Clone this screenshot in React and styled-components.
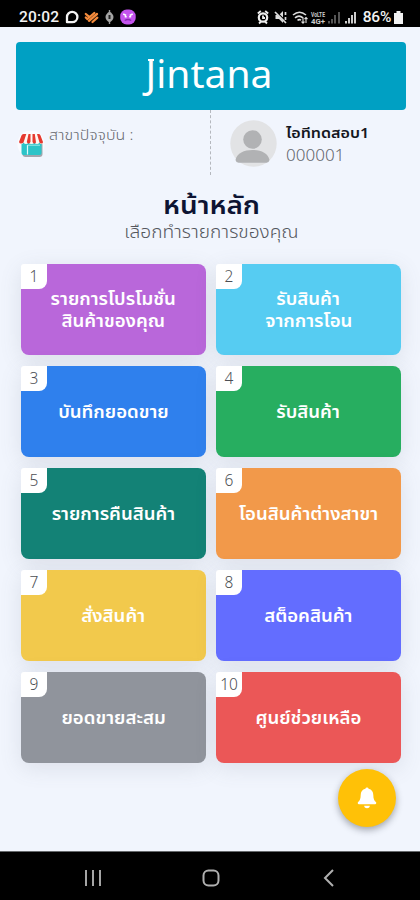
import styled, { createGlobalStyle } from "styled-components";

const GlobalStyle = createGlobalStyle`
  * {
    box-sizing: border-box;
  }

  body {
    margin: 0;
    background: #f1f5fd;
    font-family: "Noto Sans Thai", "Prompt", "Kanit", "Noto Sans", sans-serif;
  }
`;

const Phone = styled.div`
  position: relative;
  width: 420px;
  height: 900px;
  display: flex;
  flex-direction: column;
  overflow: hidden;
  background: #f1f5fd;
`;

const StatusBar = styled.div`
  height: 27px;
  flex: none;
  background: #000;
  color: #f2f2f2;
  display: flex;
  align-items: center;
  justify-content: space-between;
  padding: 6px 17px 0 19px;
  font-family: Roboto, sans-serif;
  font-size: 15.5px;
  font-weight: 500;
  line-height: 20px;
`;

const StatusGroup = styled.div`
  display: flex;
  align-items: center;
  gap: ${(p) => p.$gap}px;

  svg {
    display: block;
  }
`;

const Clock = styled.span`
  width: 42px;
  letter-spacing: 0.2px;
`;

const Battery = styled.span`
  letter-spacing: -0.3px;
`;

const Page = styled.main`
  flex: 1;
  padding: 15px 14px 0 16px;
`;

const Banner = styled.header`
  position: relative;
  height: 68px;
  border-radius: 4px;
  background: #00a0c3;
  color: #fff;
  display: flex;
  justify-content: center;
  padding-right: 4px;
  font-family: "Noto Sans", sans-serif;
  font-size: 39px;
  font-weight: 400;
  line-height: 62px;

  /* serif on the head of the J */
  &::before {
    content: "";
    position: absolute;
    left: 132px;
    top: 17px;
    width: 6px;
    height: 2px;
    background: #fff;
  }
`;

const InfoRow = styled.section`
  display: flex;
  height: 65px;
`;

const Branch = styled.div`
  width: 195px;
  border-right: 1px dashed #b5b8be;
  display: flex;
  align-items: flex-start;
  padding: 15px 0 0 1px;
  gap: 4px;
`;

const BranchIcon = styled.div`
  width: 28px;
  height: 40px;
  display: flex;
  align-items: center;
  justify-content: center;
`;

/* Wide lettering: the Thai face is stretched a little sideways */
const Wide = styled.span`
  display: block;
  transform: scaleX(${(p) => p.$x || 1.115});
  transform-origin: ${(p) => p.$origin || "center"};
  white-space: nowrap;
`;

const BranchLabel = styled(Wide)`
  color: #65686e;
  font-size: 14px;
  font-weight: 300;
  line-height: 21px;
`;

const User = styled.div`
  display: flex;
  padding: 10px 0 0 19px;
  gap: 9px;
`;

const UserText = styled.div`
  padding-top: 3px;
`;

const UserName = styled(Wide)`
  color: #16181f;
  font-size: 14px;
  font-weight: 600;
  line-height: 22px;
`;

const UserCode = styled(Wide)`
  color: #65686e;
  font-family: "Noto Sans", sans-serif;
  font-size: 15.5px;
  font-weight: 300;
  line-height: 21px;
`;

const Heading = styled.div`
  display: flex;
  flex-direction: column;
  align-items: center;
  padding-top: 15px;
  height: 89px;

  h1 {
    margin: 0 0 -1px;
    color: #0d1433;
    font-size: 25px;
    font-weight: 600;
    line-height: 32px;
  }

  p {
    margin: 0;
    color: #54575d;
    font-size: 17px;
    font-weight: 300;
    line-height: 24px;
  }
`;

const Menu = styled.nav`
  display: grid;
  grid-template-columns: 185px 185px;
  grid-auto-rows: 91px;
  gap: 11px 10px;
  padding-left: 5px;
`;

const Tile = styled.button`
  position: relative;
  border: none;
  border-radius: 8px;
  background: ${(p) => p.$color};
  box-shadow: 0 5px 22px rgba(90, 100, 110, 0.14);
  color: #fff;
  display: flex;
  flex-direction: column;
  align-items: center;
  justify-content: center;
  padding: 2px 0 0;
  font-family: inherit;
  font-size: 17px;
  font-weight: 600;
  line-height: 22px;
`;

const Num = styled.span`
  position: absolute;
  top: 0;
  left: 0;
  width: 26px;
  height: 25px;
  border-radius: 3px 0 8px 0;
  background: #fff;
  color: #4c4f54;
  font-family: "Noto Sans", sans-serif;
  font-size: 15.5px;
  font-weight: 300;
  line-height: 24px;
  text-align: center;
`;

const BellButton = styled.button`
  position: absolute;
  left: 338px;
  top: 769px;
  width: 58px;
  height: 58px;
  border: none;
  border-radius: 50%;
  background: #ffc107;
  box-shadow: 0 3px 7px rgba(40, 45, 55, 0.4);
  display: flex;
  align-items: center;
  justify-content: center;
  padding: 0;
`;

const NavBar = styled.footer`
  height: 49px;
  flex: none;
  border-top: 1px solid #66696c;
  background: #000;
  display: flex;
  align-items: center;
  justify-content: space-between;
  padding: 3px 81px 0 84px;
`;

const MENU = [
  { color: "#b967da", lines: ["รายการโปรโมชั่น", "สินค้าของคุณ"] },
  { color: "#56ccf2", lines: ["รับสินค้า", "จากการโอน"] },
  { color: "#2f80ed", lines: ["บันทึกยอดขาย"] },
  { color: "#27ae60", lines: ["รับสินค้า"] },
  { color: "#138276", lines: ["รายการคืนสินค้า"] },
  { color: "#f2994a", lines: ["โอนสินค้าต่างสาขา"] },
  { color: "#f2c94c", lines: ["สั่งสินค้า"] },
  { color: "#636dff", lines: ["สต็อคสินค้า"] },
  { color: "#90949c", lines: ["ยอดขายสะสม"] },
  { color: "#eb5757", lines: ["ศูนย์ช่วยเหลือ"] },
];

function NotificationIcons() {
  return (
    <svg width="72" height="16" viewBox="0 0 72 16" fill="none">
      <path d="M2 13.2V8a5.2 5.2 0 1 1 5.2 5.2Z" stroke="#f4f4f4" strokeWidth="2.3" strokeLinejoin="round" />
      <g stroke="#f58b3c" strokeWidth="2.3" strokeLinecap="round">
        <path d="M20.800 5l3.700 3.200M20.800 8.500l1.500 1.500 7-6M24 11.800L32 5M27.500 13l4.800-4.300" />
      </g>
      <path d="M44.500 1v14" stroke="#999" strokeWidth="1.400" />
      <path d="M44.500 2.500q4 2.500 4 5.500t-4 5.500q-4-2.500-4-5.500t4-5.500Z" fill="#a5a5a5" />
      <path d="M44.500 6v4" stroke="#222" strokeWidth="2" />
      <g transform="translate(4.200 0)">
        <rect x="51" y="0.500" width="15.500" height="15" rx="6.500" fill="#c453ee" />
        <path d="M54 5l3 1.500M63.500 5l-3 1.500" stroke="#fff" strokeWidth="1.500" />
        <path d="M55.500 7.800h2M60 7.800h2" stroke="#fff" strokeWidth="1.500" />
        <path d="M55.500 11.500q3.300-2 6.500 0" stroke="#8a2bb0" strokeWidth="1.300" />
      </g>
    </svg>
  );
}

function SystemIcons() {
  return (
    <svg width="103" height="16" viewBox="0 0 103 16" fill="none">
      <circle cx="6" cy="8.500" r="4.200" stroke="#eee" strokeWidth="2.200" />
      <path d="M.8 4.500l3-2.500M11.200 4.500l-3-2.500M2 14.500l2-2M10 14.500l-2-2M6 6.500v2.500h2" stroke="#eee" strokeWidth="1.800" />
      <path d="M18.500 6h3.500l4-4v12l-4-4h-3.500Z" fill="#ddd" />
      <path d="M18.500 2.500l11 11" stroke="#000" strokeWidth="2.200" />
      <path d="M18 3l11 11M28.500 3v3M28.500 8v3" stroke="#ddd" strokeWidth="1.700" />
      <g stroke="#ddd" strokeWidth="1.600">
        <path d="M36 6q6.500-5.500 13 0M38 8.800q4-3.500 8 0M40.500 11.300q2-1.500 3.500 0" />
        <path d="M46 8.500v6M44.500 12.700l1.500 1.500 1.500-1.500M49 14V8M47.500 10L49 8.500l1.500 1.500" strokeWidth="1.100" />
      </g>
      <g fill="#ccc" fontSize="7" fontWeight="700">
        <text x="54" y="7.500" textLength="14" lengthAdjust="spacingAndGlyphs">VoLTE</text>
        <text x="54" y="14.500" textLength="14" lengthAdjust="spacingAndGlyphs">4G+</text>
      </g>
      <g fill="#555">
        <rect x="71" y="12" width="2" height="2.500" />
        <rect x="74" y="10" width="2" height="4.500" />
        <rect x="77" y="6" width="2" height="8.500" />
        <rect x="81" y="3" width="2" height="11.500" />
      </g>
      <g fill="#ccc">
        <rect x="88" y="12" width="2" height="2.500" />
        <rect x="91" y="9" width="2" height="5.500" />
        <rect x="94" y="6" width="2" height="8.500" />
        <rect x="97" y="3" width="2" height="11.500" />
      </g>
    </svg>
  );
}

function StoreIcon() {
  return (
    <svg width="28" height="28" viewBox="0 0 28 28">
      <circle cx="14" cy="13" r="13.500" fill="#fafbff" />
      <rect x="5.500" y="11" width="20" height="15" rx="3" fill="#a2a6ad" />
      <rect x="4.500" y="10" width="20" height="14" rx="2" fill="#2cc4c8" />
      <path d="M10.500 14v9.500" stroke="#dffafa" strokeWidth="1.200" />
      <path d="M10.500 14.200h12.500" stroke="#9ee9ea" strokeWidth="1" />
      <path d="M6.500 3h15q1.500 0 2 1.500L26 11q0 2-1.500 2t-2-1.500q-1 1.500-2.500 1.500t-2.500-1.500q-1 1.500-3 1.500t-3-1.500Q10.500 13 9 13t-2.500-1.500Q6 13 4 13t-2-2l2.500-6.500Q5 3 6.500 3Z" fill="#fff7f2" />
      <path d="M6.500 3h2.800L6.500 11.500Q5.500 12.500 4 12.500T2 11l2.500-6.500Q5 3 6.500 3ZM11.500 3h2v8q-1 1.500-2 1.500T9.800 11ZM15.500 3h2.300l1.200 8.500q-1 1-1.800 1T15.500 11ZM20 3h2q1 0 1.500 1.500L26 11q0 1.500-1.500 1.500t-2-1Z" fill="#e5392f" />
    </svg>
  );
}

function Avatar() {
  return (
    <svg width="47" height="47" viewBox="0 0 47 47">
      <circle cx="23.500" cy="23.500" r="23.200" fill="#e2e3e5" />
      <circle cx="22.500" cy="19.500" r="9.300" fill="#b1b2b4" />
      <path d="M5.500 40C7 33 14 30 22.500 30S38 33 39.500 40q-.5 2.700-3 2.700h-28Q6 42.700 5.500 40Z" fill="#b1b2b4" />
    </svg>
  );
}

function BellIcon() {
  return (
    <svg width="20" height="22" viewBox="0 0 20 22" fill="#fff">
      <path d="M10 .5a1.600 1.600 0 0 1 1.600 1.200C14.700 2.400 16.300 4.800 16.300 8c0 4 1 5.800 2.600 7.100.8.800.4 2.100-.8 2.100H1.900c-1.200 0-1.600-1.300-.8-2.100C2.700 13.800 3.700 12 3.700 8c0-3.200 1.600-5.600 4.700-6.300A1.600 1.600 0 0 1 10 .5Z" />
      <path d="M7.200 18.800h5.600a2.800 2.400 0 0 1-5.600 0Z" />
    </svg>
  );
}

export default function App() {
  return (
    <Phone>
      <GlobalStyle />
      <StatusBar>
        <StatusGroup $gap={4}>
          <Clock>20:02</Clock>
          <NotificationIcons />
        </StatusGroup>
        <StatusGroup $gap={3}>
          <SystemIcons />
          <Battery>86%</Battery>
          <svg width="9" height="14" viewBox="0 0 9 14" fill="#f2f2f2">
            <path d="M2.500 1h4v2H9v11H0V3h2.500Z" />
          </svg>
        </StatusGroup>
      </StatusBar>

      <Page>
        <Banner>Jintana</Banner>

        <InfoRow>
          <Branch>
            <BranchIcon>
              <StoreIcon />
            </BranchIcon>
            <BranchLabel $x={1.14} $origin="left">สาขาปัจจุบัน :</BranchLabel>
          </Branch>
          <User>
            <Avatar />
            <UserText>
              <UserName $x={1.15} $origin="left">ไอทีทดสอบ1</UserName>
              <UserCode $x={1.1} $origin="left">000001</UserCode>
            </UserText>
          </User>
        </InfoRow>

        <Heading>
          <h1>
            <Wide>หน้าหลัก</Wide>
          </h1>
          <p>
            <Wide $x={1.125}>เลือกทำรายการของคุณ</Wide>
          </p>
        </Heading>

        <Menu>
          {MENU.map((item, i) => (
            <Tile key={item.color} $color={item.color}>
              <Num>{i + 1}</Num>
              {item.lines.map((line) => (
                <Wide key={line} $x={1.095}>{line}</Wide>
              ))}
            </Tile>
          ))}
        </Menu>
      </Page>

      <BellButton aria-label="การแจ้งเตือน">
        <BellIcon />
      </BellButton>

      <NavBar>
        <svg width="18" height="18" viewBox="0 0 18 18" stroke="#a5a5a5" strokeWidth="2">
          <path d="M2 1v16M9 1v16M16 1v16" />
        </svg>
        <svg width="18" height="18" viewBox="0 0 18 18" fill="none" stroke="#b0b0b0" strokeWidth="2">
          <rect x="1.500" y="1.500" width="15" height="15" rx="5" />
        </svg>
        <svg width="20" height="18" viewBox="-4 0 20 18" fill="none" stroke="#b0b0b0" strokeWidth="2">
          <path d="M10 1L2 9l8 8" />
        </svg>
      </NavBar>
    </Phone>
  );
}
